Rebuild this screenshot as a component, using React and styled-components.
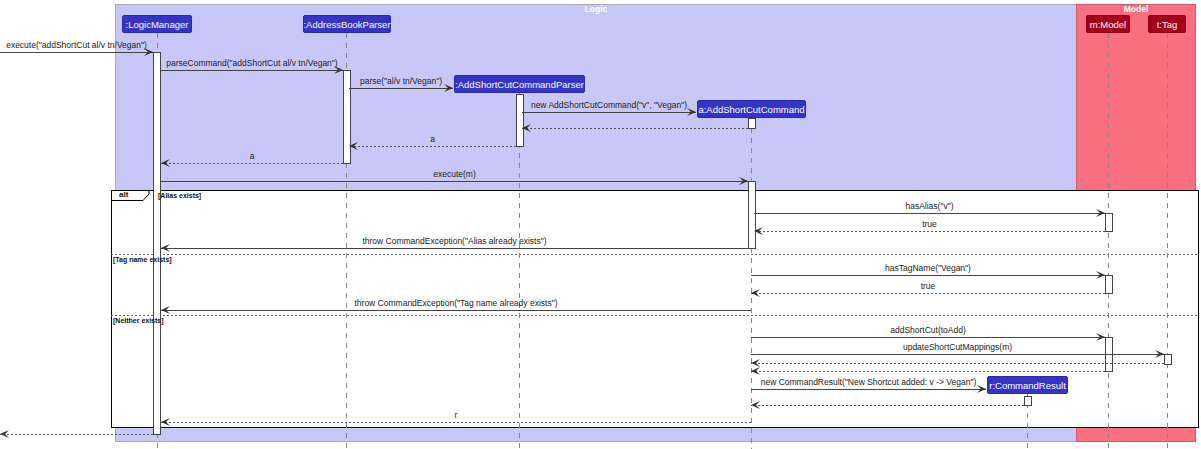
import React from "react";
import styled, { createGlobalStyle } from "styled-components";

const GlobalStyle = createGlobalStyle`
  html, body { margin: 0; padding: 0; background: #ffffff; }
  body { font-family: "Liberation Sans", Arial, sans-serif; }
`;

// the diagram is a free canvas: nodes and labels sit at their diagram coordinates
const Canvas = styled.div`
  position: relative;
  width: 1201px;
  height: 449px;
  overflow: hidden;
  background: #ffffff;
`;

const Panel = styled.div`
  position: absolute;
  top: 4px;
  left: ${(p) => p.$x}px;
  width: ${(p) => p.$w}px;
  height: 438px;
  background: ${(p) => p.$bg};
  border: 1px solid ${(p) => p.$border};
  box-sizing: border-box;
  color: #ffffff;
  font-size: 8.5px;
  font-weight: bold;
  text-align: center;
  line-height: 9px;
`;

const Layer = styled.svg`
  position: absolute;
  left: 0;
  top: 0;
`;

const Participant = styled.div`
  position: absolute;
  left: ${(p) => p.$x}px;
  top: ${(p) => p.$y}px;
  width: ${(p) => p.$w}px;
  height: 18px;
  display: flex;
  align-items: center;
  justify-content: center;
  background: ${(p) => (p.$model ? "#a3001c" : "#3434c8")};
  border: 1px solid ${(p) => (p.$model ? "#8a0016" : "#2a2aa8")};
  border-radius: 2px;
  box-sizing: border-box;
  color: #ffffff;
  font-size: 9.5px;
  white-space: nowrap;
`;

const Label = styled.div`
  position: absolute;
  left: ${(p) => p.$x}px;
  top: ${(p) => p.$y}px;
  transform: translateX(-50%);
  font-size: 8.5px;
  line-height: 10px;
  color: #222;
  white-space: nowrap;
`;

const Guard = styled.div`
  position: absolute;
  left: ${(p) => p.$x}px;
  top: ${(p) => p.$y}px;
  font-size: 7px;
  font-weight: bold;
  line-height: 8px;
  color: #111;
  white-space: nowrap;
`;

const AltTab = styled.div`
  position: absolute;
  left: 111px;
  top: 190px;
  width: 38px;
  height: 10px;
  font-size: 8px;
  font-weight: bold;
  line-height: 10px;
  padding-left: 8px;
  box-sizing: border-box;
  color: #111;
`;

const participants = [
  { name: ":LogicManager", x: 122, y: 15, w: 70 },
  { name: ":AddressBookParser", x: 303, y: 15, w: 88 },
  { name: ":AddShortCutCommandParser", x: 454, y: 75, w: 131 },
  { name: "a:AddShortCutCommand", x: 697, y: 100, w: 109 },
  { name: "r:CommandResult", x: 987, y: 376, w: 81 },
  { name: "m:Model", x: 1086, y: 15, w: 44, model: true },
  { name: "t:Tag", x: 1148, y: 15, w: 38, model: true },
];

const lifelines = [
  { x: 157, y: 33 },
  { x: 346, y: 33 },
  { x: 519, y: 93 },
  { x: 751, y: 118 },
  { x: 1027, y: 393 },
  { x: 1108, y: 33 },
  { x: 1167, y: 33 },
];

const activations = [
  [153, 52, 434],
  [343, 70, 163],
  [516, 94, 146],
  [748, 118, 128],
  [748, 181, 248],
  [1105, 213, 231],
  [1105, 275, 293],
  [1105, 337, 371],
  [1164, 354, 364],
  [1024, 396, 405],
];

const guards = [
  { t: "[Alias exists]", x: 158, y: 192 },
  { t: "[Tag name exists]", x: 113, y: 256 },
  { t: "[Neither exists]", x: 113, y: 317 },
];

const messages = [
  { y: 52, a: 0, b: 153, t: 'execute("addShortCut al/v tn/Vegan")' },
  { y: 70, a: 161, b: 343, t: 'parseCommand("addShortCut al/v tn/Vegan")' },
  { y: 88, a: 349, b: 453, t: 'parse("al/v tn/Vegan")' },
  { y: 112, a: 522, b: 696, t: 'new AddShortCutCommand("v", "Vegan")' },
  { y: 128, a: 748, b: 522, d: true },
  { y: 146, a: 516, b: 349, t: "a", d: true },
  { y: 163, a: 343, b: 161, t: "a", d: true },
  { y: 181, a: 161, b: 748, t: "execute(m)" },
  { y: 213, a: 754, b: 1105, t: 'hasAlias("v")' },
  { y: 231, a: 1105, b: 754, t: "true", d: true },
  { y: 248, a: 748, b: 161, t: 'throw CommandException("Alias already exists")' },
  { y: 275, a: 751, b: 1105, t: 'hasTagName("Vegan")' },
  { y: 293, a: 1105, b: 751, t: "true", d: true },
  { y: 310, a: 751, b: 161, t: 'throw CommandException("Tag name already exists")' },
  { y: 337, a: 751, b: 1105, t: "addShortCut(toAdd)" },
  { y: 354, a: 751, b: 1164, t: "updateShortCutMappings(m)" },
  { y: 363, a: 1164, b: 751, d: true },
  { y: 371, a: 1105, b: 751, d: true },
  { y: 389, a: 751, b: 986, t: 'new CommandResult("New Shortcut added: v -> Vegan")' },
  { y: 405, a: 1024, b: 751, d: true },
  { y: 422, a: 751, b: 161, t: "r", d: true },
  { y: 434, a: 153, b: 0, d: true },
];

const Arrow = ({ m }) => {
  const dir = m.b > m.a ? 1 : -1;
  const tip = m.b;
  const head = `M ${tip} ${m.y} L ${tip - dir * 9} ${m.y - 4} L ${tip - dir * 5} ${m.y} L ${tip - dir * 9} ${m.y + 4} Z`;
  return (
    <g>
      <line
        x1={m.a}
        y1={m.y + 0.5}
        x2={tip}
        y2={m.y + 0.5}
        stroke={m.d ? "#555" : "#444"}
        strokeWidth="1"
        strokeDasharray={m.d ? "2 2" : undefined}
      />
      <path d={head} fill="#333" />
    </g>
  );
};

const App = () => (
  <Canvas>
    <GlobalStyle />
    <Panel $x={115} $w={962} $bg="#c8c8f8" $border="#a8a8b8">
      Logic
    </Panel>
    <Panel $x={1076} $w={120} $bg="#f8707f" $border="#c86070">
      Model
    </Panel>
    <Layer width="1201" height="449">
      <rect x="111.5" y="190.5" width="1087" height="237" fill="#ffffff" stroke="#000" strokeWidth="1" />
      <path d="M111.5 200.5 H143 L149 194 V190.5" fill="none" stroke="#000" strokeWidth="1" />
      <line x1="111" y1="254.5" x2="1198" y2="254.5" stroke="#666" strokeDasharray="2 2" />
      <line x1="111" y1="315.5" x2="1198" y2="315.5" stroke="#666" strokeDasharray="2 2" />
      {lifelines.map((l, i) => (
        <line key={i} x1={l.x + 0.5} y1={l.y} x2={l.x + 0.5} y2="449" stroke="#888" strokeDasharray="5 5" />
      ))}
      {activations.map(([x, y1, y2], i) => (
        <rect key={i} x={x + 0.5} y={y1 + 0.5} width="7" height={y2 - y1} fill="#ffffff" stroke="#444" />
      ))}
      {messages.map((m, i) => (
        <Arrow key={i} m={m} />
      ))}
    </Layer>
    <AltTab>alt</AltTab>
    {guards.map((g) => (
      <Guard key={g.t} $x={g.x} $y={g.y}>
        {g.t}
      </Guard>
    ))}
    {messages
      .filter((m) => m.t)
      .map((m, i) => (
        <Label key={i} $x={(m.a + m.b) / 2} $y={m.y - 12}>
          {m.t}
        </Label>
      ))}
    {participants.map((p) => (
      <Participant key={p.name} $model={p.model} $x={p.x} $y={p.y} $w={p.w}>
        {p.name}
      </Participant>
    ))}
  </Canvas>
);

export default App;
